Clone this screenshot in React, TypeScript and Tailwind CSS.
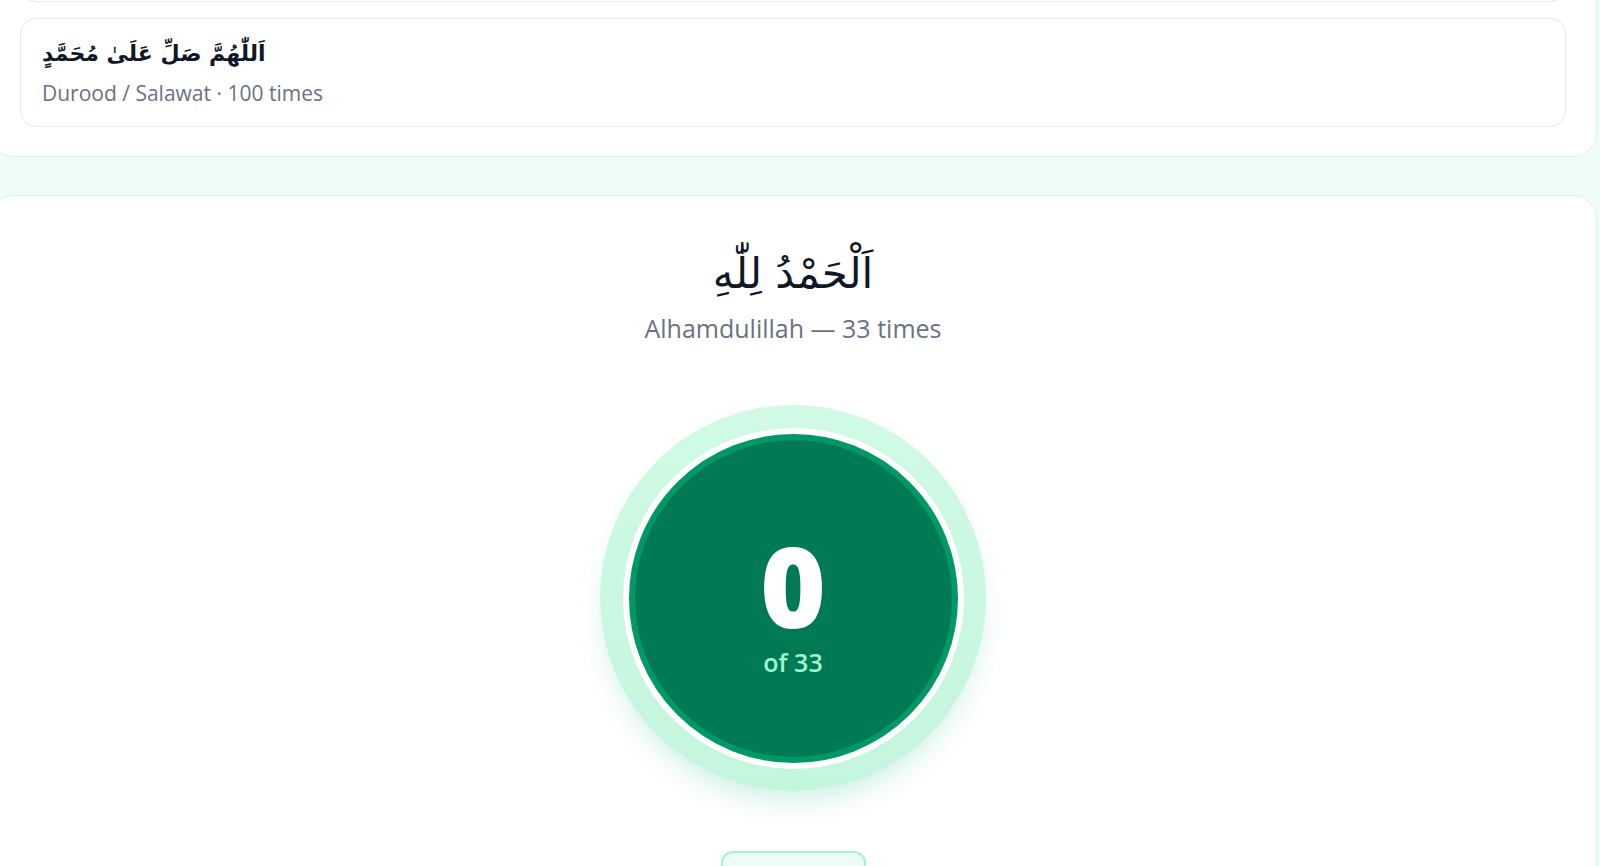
import React from "react";

const LATIN = "font-['Open_Sans','Noto_Sans',sans-serif]";
const ARABIC = "font-['DejaVu_Sans','Noto_Sans',sans-serif]";

function DhikrRow({ arabic, label }: { arabic: string; label: string }) {
  return (
    <div className="rounded-2xl border border-gray-200 bg-white px-[21px] pt-[17px] pb-[19px]">
      <p dir="rtl" className={`${ARABIC} text-[22px] leading-[36px] font-bold text-gray-900`} style={{ textAlign: "left" }}>
        {arabic}
      </p>
      <p className={`${LATIN} mt-[7px] text-[21px] leading-[28px] text-gray-500`}>{label}</p>
    </div>
  );
}

export default function App() {
  return (
    <div className={`${LATIN} h-[866px] w-[1600px] overflow-hidden bg-[#effdf6]`}>
      <div className="-ml-[11px] w-[1608px]">
        {/* list card */}
        <div className="-mt-[200px] rounded-3xl border border-emerald-100 bg-white px-[30px] pb-[29px]">
          <div className="flex flex-col gap-4">
            <div className="h-[201px] rounded-2xl border border-gray-200 bg-white" />
            <DhikrRow arabic="اَللّٰهُمَّ صَلِّ عَلَىٰ مُحَمَّدٍ" label="Durood / Salawat · 100 times" />
          </div>
        </div>

        {/* counter card */}
        <div className="mt-[38px] rounded-3xl border border-emerald-100 bg-white pt-[46px] pb-10">
          <div className="flex flex-col items-center">
            <h2 dir="rtl" className={`${ARABIC} text-[42px] leading-[64px] text-gray-900`}>
              اَلْحَمْدُ لِلّٰهِ
            </h2>
            <p className="mt-[5px] text-[25px] leading-[34px] text-gray-500">Alhamdulillah — 33 times</p>

            <div className="mt-[60px] flex h-[386px] w-[386px] items-center justify-center rounded-full bg-gradient-to-b from-emerald-100 to-[#c4f5dd] shadow-[0_16px_30px_-10px_rgba(16,185,129,0.25)]">
              <div className="flex h-[341px] w-[341px] items-center justify-center rounded-full bg-white">
                <div className="flex h-[329px] w-[329px] flex-col items-center justify-center rounded-full border-[6px] border-[#009966] bg-[#007a55]">
                  <span className="mt-[25px] text-[112px] leading-[84px] font-extrabold text-white">0</span>
                  <span className="mt-[19px] text-[25px] leading-[32px] font-semibold text-emerald-200">of 33</span>
                </div>
              </div>
            </div>

            <button className="mt-[60px] h-[48px] w-[145px] rounded-xl border-2 border-emerald-200 bg-emerald-50" />
          </div>
        </div>
      </div>
    </div>
  );
}
